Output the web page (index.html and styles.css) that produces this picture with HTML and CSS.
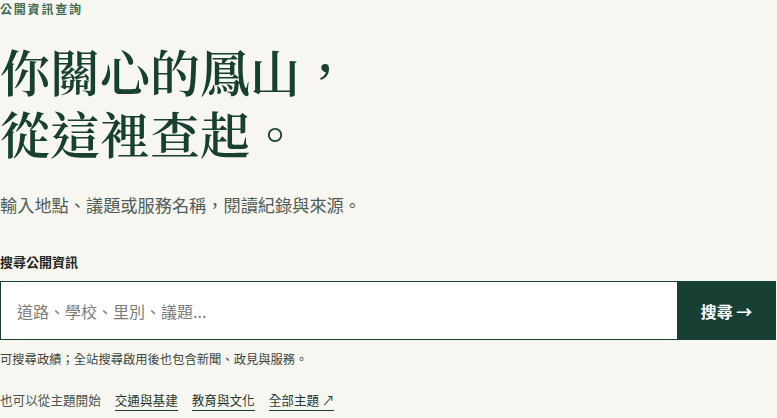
FILE: index.html
```html
<!DOCTYPE html>
<html lang="zh-Hant">
<head>
<meta charset="utf-8">
<title>公開資訊查詢</title>
<link rel="stylesheet" href="styles.css">
</head>
<body>
<main class="hero">
  <p class="eyebrow">公開資訊查詢</p>
  <h1 class="title"><span class="title-line">你關心的鳳山，</span><span class="title-line">從這裡查起。</span></h1>
  <p class="lede">輸入地點、議題或服務名稱，閱讀紀錄與來源。</p>
  <form class="search">
    <label class="search-label" for="q">搜尋公開資訊</label>
    <div class="search-row">
      <input id="q" class="search-input" type="text" placeholder="道路、學校、里別、議題...">
      <button class="search-btn" type="button">搜尋 →</button>
    </div>
    <p class="hint">可搜尋政績；全站搜尋啟用後也包含新聞、政見與服務。</p>
  </form>
  <nav class="topics">
    <span class="topics-lead">也可以從主題開始</span>
    <a class="topic" href="#">交通與基建</a>
    <a class="topic" href="#">教育與文化</a>
    <a class="topic" href="#">全部主題 ↗</a>
  </nav>
</main>
</body>
</html>
```
FILE: styles.css
```css
html, body {
  margin: 0;
  padding: 0;
  background: #f7f6f0;
}
body {
  font-family: "Noto Sans CJK TC", "Noto Sans", sans-serif;
  color: #1f2a25;
}
.hero {
  width: 777px;
  display: flex;
  flex-direction: column;
}
.eyebrow {
  margin: 1px 0 0;
  font-size: 12px;
  line-height: 16px;
  letter-spacing: 1.8px;
  font-weight: 700;
  color: #3c6b54;
}
.title {
  margin: 22px 0 0;
  display: flex;
  flex-direction: column;
  font-family: "Noto Serif CJK TC", "Noto Serif CJK SC", "Noto Serif", serif;
  font-size: 50px;
  line-height: 62px;
  font-weight: 600;
  color: #17402f;
}
.title-line {
  display: block;
  height: 62px;
}
.lede {
  margin: 29px 0 0;
  font-size: 17.2px;
  line-height: 26px;
  color: #4f5d56;
}
.search {
  margin-top: 35px;
  display: flex;
  flex-direction: column;
}
.search-label {
  font-size: 13px;
  line-height: 18px;
  font-weight: 700;
  color: #1d2622;
}
.search-row {
  display: flex;
  margin-top: 10px;
  height: 59px;
}
.search-input {
  flex: 1;
  box-sizing: border-box;
  height: 59px;
  margin: 0;
  border: 1px solid #17402f;
  border-right: none;
  background: #ffffff;
  padding: 0 16px;
  font-family: inherit;
  font-size: 16px;
  color: #333;
  outline: none;
}
.search-input::placeholder {
  color: #7b7d7b;
}
.search-btn {
  width: 99px;
  height: 59px;
  margin: 0 1px 0 0;
  border: none;
  background: #173f33;
  color: #ffffff;
  font-family: inherit;
  font-size: 16px;
  font-weight: 700;
  cursor: pointer;
}
.hint {
  margin: 10px 0 0;
  font-size: 12.3px;
  line-height: 18px;
  color: #3e4743;
}
.topics {
  margin-top: 23px;
  display: flex;
  align-items: baseline;
  gap: 14px;
  font-size: 12.6px;
  line-height: 18px;
}
.topics-lead {
  color: #49524e;
}
.topic {
  color: #1f3a30;
  text-decoration: none;
  border-bottom: 1px solid #17402f;
  padding-bottom: 1px;
}
```
